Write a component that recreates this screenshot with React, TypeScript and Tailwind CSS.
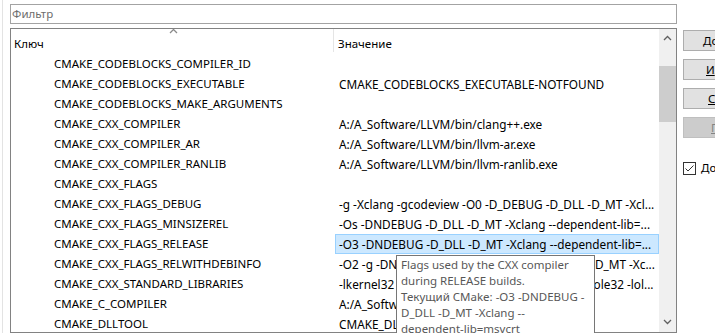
const ROWS: [string, string][] = [
  ["CMAKE_CODEBLOCKS_COMPILER_ID", ""],
  ["CMAKE_CODEBLOCKS_EXECUTABLE", "CMAKE_CODEBLOCKS_EXECUTABLE-NOTFOUND"],
  ["CMAKE_CODEBLOCKS_MAKE_ARGUMENTS", ""],
  ["CMAKE_CXX_COMPILER", "A:/A_Software/LLVM/bin/clang++.exe"],
  ["CMAKE_CXX_COMPILER_AR", "A:/A_Software/LLVM/bin/llvm-ar.exe"],
  ["CMAKE_CXX_COMPILER_RANLIB", "A:/A_Software/LLVM/bin/llvm-ranlib.exe"],
  ["CMAKE_CXX_FLAGS", ""],
  ["CMAKE_CXX_FLAGS_DEBUG", "-g -Xclang -gcodeview -O0 -D_DEBUG -D_DLL -D_MT -Xcl..."],
  ["CMAKE_CXX_FLAGS_MINSIZEREL", "-Os -DNDEBUG -D_DLL -D_MT -Xclang --dependent-lib=..."],
  ["CMAKE_CXX_FLAGS_RELEASE", "-O3 -DNDEBUG -D_DLL -D_MT -Xclang --dependent-lib=..."],
  ["CMAKE_CXX_FLAGS_RELWITHDEBINFO", "-O2 -g -DNDEBUG -Xclang -gcodeview -D_DLL -D_MT -Xc..."],
  ["CMAKE_CXX_STANDARD_LIBRARIES", "-lkernel32 -luser32 -lgdi32 -lwinmm -lshell32 -lole32 -lol..."],
  ["CMAKE_C_COMPILER", "A:/A_Software/LLVM/bin/clang.exe"],
  ["CMAKE_DLLTOOL", "CMAKE_DLLTOOL-NOTFOUND"],
];

function Chevron({ up, className }: { up?: boolean; className?: string }) {
  return (
    <svg width="9" height="6" viewBox="0 0 9 6" className={className}>
      <polyline
        points={up ? "1,5 4.5,1.5 8,5" : "1,1 4.5,4.5 8,1"}
        fill="none"
        stroke="currentColor"
        strokeWidth="1.3"
      />
    </svg>
  );
}

export default function App() {
  return (
    <div className="w-[715px] h-[333px] bg-white overflow-hidden flex text-[11.5px] text-black font-['Noto_Sans',sans-serif] leading-[20px]">
      <div className="w-[2px] shrink-0" />
      <div className="w-px shrink-0 bg-[#e3e3e3]" />
      <div className="w-[667px] shrink-0 ml-[7px] flex flex-col">
        <div className="mt-[4px] h-[20px] border border-[#a3a3a3] flex items-center pl-[1px] text-[#6d6d6d]">
          Фильтр
        </div>
        <div className="mt-[4px] h-[305px] border border-[#828282] flex relative">
          <div className="flex-1 flex flex-col overflow-hidden">
            <div className="h-[25px] shrink-0 flex relative">
              <div className="w-[323px] pl-[3px] pt-[5px] border-r border-[#e5e5e5] h-[23px]">Ключ</div>
              <div className="flex-1 pl-[4px] pt-[5px]">Значение</div>
              <Chevron up className="absolute left-[158px] top-[-1px] text-[#8a8a8a]" />
            </div>
            {ROWS.map(([k, v], i) => (
              <div key={k} className="h-[20px] shrink-0 flex">
                <div className="w-[324px] pl-[43px] whitespace-nowrap">{k}</div>
                <div
                  className={
                    i === 9
                      ? "flex-1 h-[20px] leading-[18px] pl-[3px] text-[11.8px] whitespace-nowrap overflow-hidden bg-[#cce8ff] border border-[#99d1ff]"
                      : "flex-1 h-[20px] pl-[4px] text-[11.8px] whitespace-nowrap overflow-hidden"
                  }
                >
                  {v}
                </div>
              </div>
            ))}
          </div>
          <div className="w-[17px] shrink-0 bg-[#f0f0f0] flex flex-col items-center">
            <div className="h-[17px] flex items-center justify-center text-[#606060]">
              <Chevron up />
            </div>
            <div className="w-full mt-[20px] h-[56px] bg-[#cdcdcd]" />
            <div className="flex-1" />
            <div className="h-[17px] mb-[2px] flex items-center justify-center text-[#606060]">
              <Chevron />
            </div>
          </div>
          <div className="absolute left-[385px] top-[226px] w-[199px] h-[90px] bg-white border border-[#767676] text-[#575757] pl-[4px] pt-[1px] leading-[16px]">
            <div>Flags used by the CXX compiler</div>
            <div>during RELEASE builds.</div>
            <div>Текущий CMake: -O3 -DNDEBUG -</div>
            <div>D_DLL -D_MT -Xclang --</div>
            <div>dependent-lib=msvcrt</div>
          </div>
        </div>
      </div>
      <div className="ml-[6px] w-[90px] shrink-0 flex flex-col">
        <div className="mt-[30px] h-[21px] bg-[#e1e1e1] border border-[#adadad] pl-[19px] flex items-center">Добавить</div>
        <div className="mt-[8px] h-[21px] bg-[#e1e1e1] border border-[#adadad] pl-[22px] flex items-center">
          <span className="underline">И</span>зменить
        </div>
        <div className="mt-[8px] h-[21px] bg-[#e1e1e1] border border-[#adadad] pl-[24px] flex items-center">
          <span className="underline">С</span>бросить
        </div>
        <div className="mt-[8px] h-[21px] bg-[#cccccc] border border-[#bfbfbf] pl-[27px] flex items-center text-[#838383]">
          <span className="underline">П</span>равка
        </div>
        <div className="mt-[20px] flex items-center gap-[5px]">
          <div className="w-[13px] h-[13px] border border-[#333333] bg-white flex items-center justify-center">
            <svg width="11" height="11" viewBox="0 0 11 11">
              <polyline points="1.5,5.5 4,8 9.5,2.5" fill="none" stroke="#333333" strokeWidth="1" />
            </svg>
          </div>
          <span>Дополнительно</span>
        </div>
      </div>
    </div>
  );
}
